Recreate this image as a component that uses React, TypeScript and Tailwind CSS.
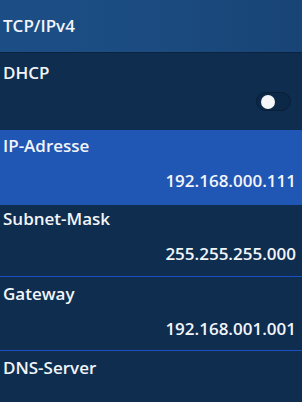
import React from "react";

interface RowProps {
  label: string;
  value?: string;
  active?: boolean;
  height: string;
  pad: string;
  border?: boolean;
  children?: React.ReactNode;
}

function Row({ label, value, active, height, pad, border, children }: RowProps) {
  return (
    <div
      className={`${height} ${pad} flex flex-col px-[3px] ${
        active ? "bg-[#2056b4]" : "bg-[#0e2d4f]"
      } ${border ? "border-t border-[#1c4fc4]" : ""}`}
    >
      <div className="leading-5">{label}</div>
      {value && (
        <div className="mt-[15px] pr-[3px] text-right leading-5">{value}</div>
      )}
      {children}
    </div>
  );
}

export default function App() {
  return (
    <div
      className="w-[302px] h-[402px] overflow-hidden bg-[#0e2d4f] text-[17px] font-semibold text-[#f2f5f9]"
      style={{ fontFamily: '"Open Sans", "DejaVu Sans", sans-serif' }}
    >
      <div className="h-[53px] pt-[16px] px-[3px] bg-gradient-to-r from-[#1c4e86] via-[#1b4b80] to-[#184476] border-b border-[#0a2340] leading-5">
        TCP/IPv4
      </div>
      <Row label="DHCP" height="h-[77px]" pad="pt-[10px]">
        <div className="mt-[9px] flex justify-end pr-[8px]">
          <div className="w-[35px] h-[19px] rounded-full border border-[#0a1e36] bg-[#0c2847] flex items-center pl-[4px]">
            <div className="w-[14px] h-[14px] rounded-full bg-[#f4f6f8]" />
          </div>
        </div>
      </Row>
      <Row
        label="IP-Adresse"
        value="192.168.000.111"
        active
        height="h-[75px]"
        pad="pt-[6px]"
      />
      <Row
        label="Subnet-Mask"
        value="255.255.255.000"
        height="h-[71px]"
        pad="pt-[4px]"
      />
      <Row
        label="Gateway"
        value="192.168.001.001"
        height="h-[74px]"
        pad="pt-[7px]"
        border
      />
      <Row label="DNS-Server" height="h-[60px]" pad="pt-[7px]" border />
    </div>
  );
}
